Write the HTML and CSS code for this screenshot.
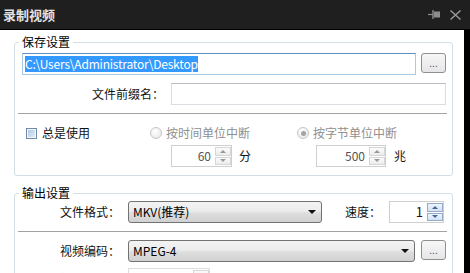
FILE: index.html
```html
<!DOCTYPE html>
<html lang="zh-CN">
<head>
    <meta charset="UTF-8">
    <title>录制视频</title>
    <link rel="stylesheet" href="styles.css">
</head>
<body>
    <div class="titlebar">
        <span class="title">录制视频</span>
        <span class="tb-icons">
            <svg class="pin" width="12" height="10" viewBox="0 0 12 10">
                <path d="M0 4.5h5" stroke="#8c8c8c" stroke-width="1.2"/>
                <path d="M5 0v9" stroke="#8c8c8c" stroke-width="1.4"/>
                <rect x="6" y="1.5" width="6" height="6" fill="#8c8c8c"/>
            </svg>
            <svg class="close" width="11" height="10" viewBox="0 0 11 10">
                <path d="M0.5 0.5L10.5 9.5M10.5 0.5L0.5 9.5" stroke="#9b9b9b" stroke-width="1.4"/>
            </svg>
        </span>
    </div>

    <div class="main">
        <fieldset class="group">
            <legend>保存设置</legend>
            <div class="row r-path">
                <div class="textbox focused"><span class="sel">C:\Users\Administrator\Desktop</span></div>
                <button class="browse">...</button>
            </div>
            <div class="row r-prefix">
                <span class="lbl lbl-prefix">文件前缀名：</span>
                <div class="textbox"></div>
            </div>
            <div class="sep"></div>
            <div class="row r-opts">
                <span class="check"><span class="box"></span>总是使用</span>
                <span class="radio disabled opt-time"><span class="dot"></span>按时间单位中断</span>
                <span class="radio disabled checked"><span class="dot"></span>按字节单位中断</span>
            </div>
            <div class="row r-units">
                <div class="unit unit-time">
                    <div class="spin spin-60">
                        <span class="val">60</span>
                        <span class="btns"><span class="up"></span><span class="down"></span></span>
                    </div>
                    <span class="unit-lbl">分</span>
                </div>
                <div class="unit">
                    <div class="spin spin-500">
                        <span class="val">500</span>
                        <span class="btns"><span class="up"></span><span class="down"></span></span>
                    </div>
                    <span class="unit-lbl unit-mb">兆</span>
                </div>
            </div>
        </fieldset>

        <fieldset class="group group-out">
            <legend>输出设置</legend>
            <div class="row">
                <span class="lbl lbl-out">文件格式：</span>
                <div class="combo combo-format">MKV(推荐)<span class="arrow"></span></div>
                <span class="lbl lbl-speed">速度：</span>
                <div class="spin spin-speed active">
                    <span class="val">1</span>
                    <span class="btns"><span class="up"></span><span class="down"></span></span>
                </div>
            </div>
            <div class="sep"></div>
            <div class="row r-codec">
                <span class="lbl lbl-out">视频编码：</span>
                <div class="combo combo-codec">MPEG-4<span class="arrow"></span></div>
                <button class="browse">...</button>
            </div>
            <div class="row r-faded">
                <span class="lbl lbl-out faded">视频质量：</span>
                <div class="spin spin-quality">
                    <span class="val"></span>
                    <span class="btns"><span class="up"></span><span class="down"></span></span>
                </div>
            </div>
        </fieldset>
    </div>
</body>
</html>
```

FILE: styles.css
```css
body {
    margin: 0;
    width: 470px;
    height: 273px;
    overflow: hidden;
    background: #ffffff;
    font-family: "Noto Sans CJK SC", "Noto Sans", sans-serif;
    font-size: 12px;
    line-height: 16px;
    color: #111111;
}

.titlebar {
    height: 29px;
    border-bottom: 1px solid #000000;
    background: #1f1f1f;
    display: flex;
    align-items: center;
    justify-content: space-between;
    padding: 0 9px 0 3px;
}

.title {
    font-size: 13px;
    font-weight: bold;
    color: #e2e2e2;
}

.tb-icons {
    display: flex;
    align-items: center;
    gap: 10px;
}

.main {
    height: 243px;
    box-sizing: border-box;
    padding-top: 4px;
    border-right: 6px solid #000000;
    overflow: hidden;
}

.group {
    margin: 0 11px 0 14px;
    padding: 0 6px 8px 7px;
    border: 1px solid #d3dee5;
    border-radius: 3px;
    min-width: 0;
}

.group-out {
    margin-top: 9px;
}

legend {
    padding: 0 3px;
    margin-left: -3px;
    line-height: 16px;
    color: #000000;
}

.row {
    display: flex;
    align-items: center;
}

.textbox {
    flex: 1;
    height: 22px;
    box-sizing: border-box;
    border: 1px solid #dadde2;
    border-top-color: #b9bcc2;
    background: #ffffff;
    padding: 2px 2px;
}

.textbox.focused {
    border-color: #a9c9e9;
    border-top-color: #5d8fc2;
    margin-right: 5px;
}

.sel {
    background: #3399ff;
    color: #ffffff;
    display: inline-block;
    line-height: 16px;
    letter-spacing: -0.2px;
}

.browse {
    width: 25px;
    height: 20px;
    align-self: flex-start;
    padding: 0;
    border: 1px solid #8f8f8f;
    border-radius: 3px;
    background: linear-gradient(#f7f7f7, #e6e6e6);
    font-family: inherit;
    font-size: 10px;
    line-height: 12px;
    color: #5a4a8a;
}

.r-path {
    margin-top: 3px;
}

.r-prefix {
    margin-top: 8px;
}

.lbl {
    text-align: right;
    color: #111111;
}

.lbl-prefix {
    width: 142px;
    margin-right: 7px;
}

.sep {
    height: 1px;
    background: #a3a3a3;
    margin: 8px -1px 0 -4px;
}

.r-opts {
    margin-top: 10px;
    height: 18px;
    padding-left: 4px;
}

.check {
    display: flex;
    align-items: center;
    width: 124px;
}

.check .box {
    width: 11px;
    height: 11px;
    box-sizing: border-box;
    border: 1px solid #7389a6;
    box-shadow: inset 0 0 0 1px #f2f6fb;
    background: linear-gradient(135deg, #a9c4e2, #e8f1fa);
    margin-right: 5px;
}

.radio {
    display: flex;
    align-items: center;
}

.opt-time {
    width: 147px;
}

.radio .dot {
    width: 12px;
    height: 12px;
    box-sizing: border-box;
    border: 1px solid #c6c6c6;
    border-radius: 50%;
    background: radial-gradient(circle at 40% 35%, #ffffff, #e4e4e4);
    margin-right: 4px;
    display: flex;
    align-items: center;
    justify-content: center;
}

.radio.checked .dot::after {
    content: "";
    width: 5px;
    height: 5px;
    border-radius: 50%;
    background: #a4a4a4;
}

.disabled {
    color: #8f8f8f;
}

.r-units {
    margin-top: 3px;
    padding-left: 149px;
}

.unit {
    display: flex;
    align-items: center;
}

.unit-time {
    width: 145px;
}

.unit-lbl {
    margin-left: 7px;
    color: #111111;
}

.unit-mb {
    margin-left: 8px;
}

.spin {
    display: flex;
    height: 22px;
    box-sizing: border-box;
    border: 1px solid #cfcfcf;
    background: #ffffff;
}

.spin-60 {
    width: 61px;
}

.spin-500 {
    width: 70px;
}

.spin-speed {
    width: 55px;
}

.spin .val {
    flex: 1;
    text-align: right;
    padding-right: 4px;
    line-height: 20px;
    color: #555555;
}

.spin-speed .val {
    color: #2a1020;
    font-size: 13px;
}

.btns {
    width: 16px;
    display: flex;
    flex-direction: column;
    gap: 1px;
    padding: 1px 0 1px 0;
}

.btns span {
    flex: 1;
    border: 1px solid #d6d6d6;
    background: linear-gradient(#fbfbfb, #ececec);
    display: flex;
    align-items: center;
    justify-content: center;
}

.btns .up::after,
.btns .down::after {
    content: "";
    border-left: 3px solid transparent;
    border-right: 3px solid transparent;
}

.btns .up::after {
    border-bottom: 3px solid #9a9a9a;
}

.btns .down::after {
    border-top: 3px solid #9a9a9a;
}

.active .btns span {
    border-color: #93aacb;
    background: linear-gradient(#eef4fb, #d3e2f3);
}

.active .btns .up::after {
    border-bottom-color: #4566a0;
}

.active .btns .down::after {
    border-top-color: #4566a0;
}

.lbl-out {
    width: 98px;
    margin-right: 8px;
}

.lbl-speed {
    margin-left: 23px;
    margin-right: 8px;
}

.combo {
    position: relative;
    height: 22px;
    box-sizing: border-box;
    border: 1px solid #727272;
    border-radius: 3px;
    background: linear-gradient(#f3f3f3, #ececec 45%, #dedede 55%, #d1d1d1);
    padding: 0 4px;
    line-height: 20px;
    color: #000000;
}

.combo-format {
    width: 194px;
}

.combo-codec {
    width: 287px;
    margin-right: 6px;
}

.arrow {
    position: absolute;
    right: 5px;
    top: 8px;
    border-left: 4px solid transparent;
    border-right: 4px solid transparent;
    border-top: 4px solid #111111;
}

.r-codec {
    margin-top: 8px;
}

.r-faded {
    margin-top: 6px;
}

.faded {
    color: #c8c8c8;
}

.spin-quality {
    width: 82px;
    border-color: #dddddd;
}
```
